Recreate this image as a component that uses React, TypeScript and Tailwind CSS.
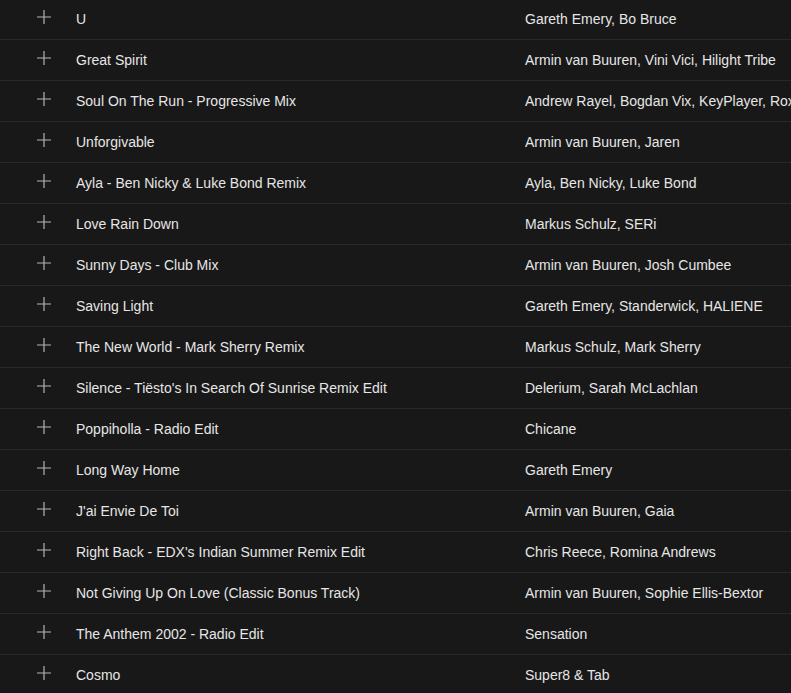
import React from "react";

const tracks: [string, string][] = [
  ["U", "Gareth Emery, Bo Bruce"],
  ["Great Spirit", "Armin van Buuren, Vini Vici, Hilight Tribe"],
  ["Soul On The Run - Progressive Mix", "Andrew Rayel, Bogdan Vix, KeyPlayer, Roxanne Emery"],
  ["Unforgivable", "Armin van Buuren, Jaren"],
  ["Ayla - Ben Nicky & Luke Bond Remix", "Ayla, Ben Nicky, Luke Bond"],
  ["Love Rain Down", "Markus Schulz, SERi"],
  ["Sunny Days - Club Mix", "Armin van Buuren, Josh Cumbee"],
  ["Saving Light", "Gareth Emery, Standerwick, HALIENE"],
  ["The New World - Mark Sherry Remix", "Markus Schulz, Mark Sherry"],
  ["Silence - Tiësto's In Search Of Sunrise Remix Edit", "Delerium, Sarah McLachlan"],
  ["Poppiholla - Radio Edit", "Chicane"],
  ["Long Way Home", "Gareth Emery"],
  ["J'ai Envie De Toi", "Armin van Buuren, Gaia"],
  ["Right Back - EDX's Indian Summer Remix Edit", "Chris Reece, Romina Andrews"],
  ["Not Giving Up On Love (Classic Bonus Track)", "Armin van Buuren, Sophie Ellis-Bextor"],
  ["The Anthem 2002 - Radio Edit", "Sensation"],
  ["Cosmo", "Super8 & Tab"],
];

const PlusIcon = () => (
  <svg width="14" height="14" viewBox="0 0 14 14" className="text-[#b3b3b3]">
    <path d="M7 0v14M0 7h14" stroke="currentColor" strokeWidth="1.2" />
  </svg>
);

export default function App() {
  return (
    <div
      className="w-[791px] h-[693px] overflow-hidden bg-[#181818] text-[#e6e6e6] text-[14px]"
      style={{ fontFamily: "'Liberation Sans', Arial, sans-serif" }}
    >
      <div className="-mt-px">
        {tracks.map(([title, artist], i) => (
          <div key={i} className="flex items-center h-[41px] border-b border-[#282828] whitespace-nowrap">
            <div className="w-[76px] shrink-0 flex pl-[37px] -mt-[5px]">
              <PlusIcon />
            </div>
            <div className="w-[449px] shrink-0">{title}</div>
            <div className="shrink-0">{artist}</div>
          </div>
        ))}
      </div>
    </div>
  );
}
